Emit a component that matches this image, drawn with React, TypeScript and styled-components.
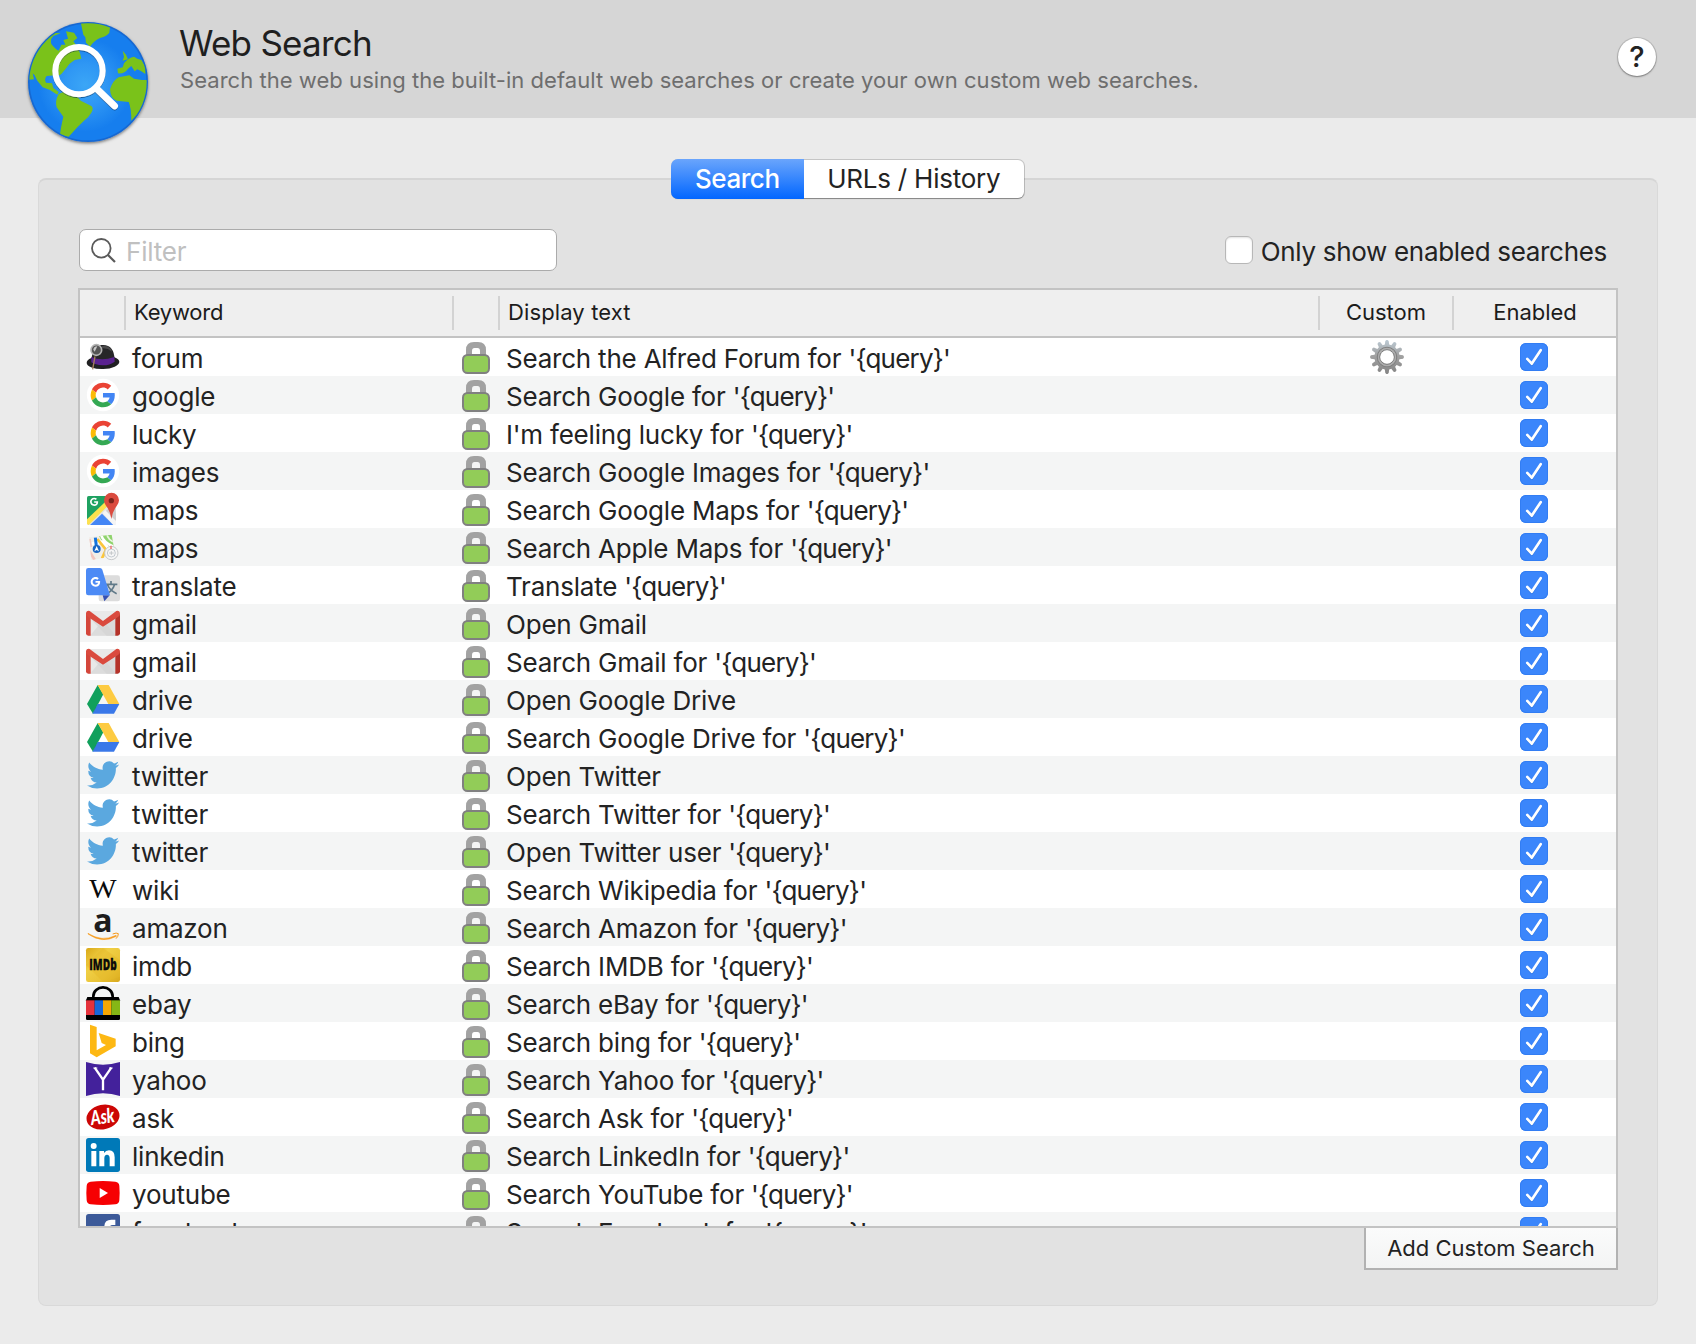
import React from "react";
import styled, { createGlobalStyle } from "styled-components";

const GlobalStyle = createGlobalStyle`
  * { box-sizing: border-box; }
  body { margin: 0; background: #ebebeb; }
`;

const Window = styled.div`
  width: 1696px;
  height: 1344px;
  overflow: hidden;
  background: #ebebeb;
  color: #232323;
  font-family: Inter, "Liberation Sans", sans-serif;
  display: flex;
  flex-direction: column;
`;

const Header = styled.header`
  height: 118px;
  flex: none;
  background: #d6d6d6;
  display: flex;
  align-items: flex-start;
  padding: 18px 40px 0 24px;
`;

const Titles = styled.div`
  flex: 1;
  padding: 4px 0 0 27px;
`;

const Title = styled.h1`
  margin: 0;
  font-size: 35px;
  line-height: 42px;
  font-weight: 400;
  letter-spacing: -0.75px;
  color: #1f1f1f;
`;

const Subtitle = styled.p`
  margin: 0;
  padding: 2px 0 0 1px;
  font-size: 22px;
  line-height: 28px;
  letter-spacing: 0.04px;
  color: #6e6e6e;
`;

const HelpButton = styled.button`
  margin-top: 20px;
  width: 38px;
  height: 38px;
  padding: 0;
  border: 0;
  border-radius: 50%;
  background: #fff;
  box-shadow: 0 0 0 1px rgba(0, 0, 0, 0.12), 0 1px 2px rgba(0, 0, 0, 0.35);
  font: 500 29px/38px Inter, sans-serif;
  color: #232323;
`;

const Body = styled.main`
  flex: 1;
  padding: 42px 38px 0;
  display: flex;
  flex-direction: column;
`;

const Tabs = styled.div`
  align-self: center;
  display: flex;
  height: 38px;
  width: 352px;
  margin: 0 0 -20px 0;
  z-index: 1;
  border-radius: 6px;
  background: #fff;
  box-shadow: 0 0 0 1px rgba(0, 0, 0, 0.16), 0 1px 1px rgba(0, 0, 0, 0.3);
`;

const Tab = styled.button<{ $active?: boolean }>`
  width: ${(p) => (p.$active ? "133px" : "221px")};
  height: ${(p) => (p.$active ? "40px" : "38px")};
  margin: ${(p) => (p.$active ? "-1px 0 -1px -1px" : "0")};
  border: 0;
  padding: 0;
  border-radius: ${(p) => (p.$active ? "7px 0 0 7px" : "0 6px 6px 0")};
  background: ${(p) => (p.$active ? "linear-gradient(#6aa5fc, #0166ff)" : "transparent")};
  color: ${(p) => (p.$active ? "#fff" : "#232323")};
  font: ${(p) => (p.$active ? 500 : 400)} 26px/36px Inter, sans-serif;
  letter-spacing: ${(p) => (p.$active ? "-0.45px" : "-0.23px")};
`;

const Panel = styled.section`
  height: 1128px;
  border: 1px solid #d9d9d9;
  border-top: 2px solid #d5d5d5;
  border-radius: 8px;
  background: #e2e2e2;
  padding: 49px 39px 0 39px;
  display: flex;
  flex-direction: column;
`;

const Toolbar = styled.div`
  height: 59px;
  flex: none;
  display: flex;
  justify-content: space-between;
  align-items: flex-start;
`;

const FilterField = styled.label`
  width: 478px;
  height: 42px;
  margin-left: 1px;
  border: 1px solid #ababab;
  border-radius: 7px;
  background: #fff;
  display: flex;
  align-items: center;
  padding-left: 11px;
`;

const FilterInput = styled.input`
  flex: 1;
  border: 0;
  outline: 0;
  padding: 3px 0 0;
  margin-left: 10px;
  background: transparent;
  font: 400 26px/36px Inter, sans-serif;
  letter-spacing: -0.2px;
  &::placeholder { color: #c0c0c0; opacity: 1; }
`;

const OnlyEnabled = styled.label`
  display: flex;
  align-items: center;
  gap: 8px;
  margin: 4px 11px 0 0;
  font-size: 26px;
  line-height: 38px;
  letter-spacing: -0.31px;
`;

const EmptyBox = styled.span`
  width: 28px;
  height: 28px;
  margin-top: -5px;
  border: 1px solid #b7b7b7;
  border-radius: 6px;
  background: #fff;
  box-shadow: inset 0 1px 2px rgba(0, 0, 0, 0.12);
`;

const Table = styled.div`
  width: 1540px;
  height: 940px;
  flex: none;
  border: 2px solid #c3c3c3;
  background: #fff;
  overflow: hidden;
`;

const columns = "46px 328px 46px 820px 134px 162px";

const HeadRow = styled.div`
  display: grid;
  grid-template-columns: ${columns};
  height: 48px;
  padding: 6px 0;
  border-bottom: 2px solid #c3c3c3;
  background: #efefef;
`;

const HeadCell = styled.div<{ $center?: boolean; $last?: boolean; $spacing?: number }>`
  border-right: ${(p) => (p.$last ? "0" : "2px solid #d3d3d3")};
  padding-left: ${(p) => (p.$center ? "0" : "8px")};
  text-align: ${(p) => (p.$center ? "center" : "left")};
  font-size: 22px;
  line-height: 33px;
  letter-spacing: ${(p) => p.$spacing ?? 0}px;
  color: #1c1c1c;
`;

const Row = styled.div`
  display: grid;
  grid-template-columns: ${columns};
  height: 38px;
  background: #fff;
  &:nth-child(odd) { background: #f4f5f5; }
`;

const IconCell = styled.div`
  padding: 2px 0 0 6px;
  height: 38px;
  svg { display: block; overflow: visible; }
`;

const LockCell = styled.div`
  padding: 4px 0 0 8px;
  svg { display: block; }
`;

const TextCell = styled.div`
  padding: 4px 0 0 6px;
  font-size: 26px;
  line-height: 34px;
  letter-spacing: -0.21px;
  white-space: nowrap;
`;

const Query = styled.span`
  letter-spacing: -0.78px;
`;

const GearCell = styled.div`
  display: flex;
  justify-content: center;
  padding-top: 2px;
`;

const CheckCell = styled.div`
  padding: 5px 0 0 66px;
`;

const CheckBox = styled.span`
  display: block;
  width: 28px;
  height: 28px;
  border-radius: 6px;
  background: #3b86fb;
  box-shadow: inset 0 0 0 1px #327df3;
  svg { display: block; }
`;

const AddButton = styled.button`
  align-self: flex-end;
  width: 254px;
  height: 42px;
  padding: 0;
  border: 2px solid #b2b2b2;
  border-top: 0;
  border-radius: 0;
  background: linear-gradient(#fbfbfb, #f3f4f4);
  color: #232323;
  font: 400 22px/38px Inter, sans-serif;
`;

const GlobeSlot = styled.div`
  width: 128px;
  height: 132px;
  flex: none;
  z-index: 1;
  svg { display: block; }
`;

const Globe = () => (
  <svg width="128" height="132" viewBox="72 54 384 396">
    <defs>
      <radialGradient id="sea" gradientUnits="userSpaceOnUse" cx="255" cy="255" r="140">
        <stop offset="0" stopColor="#3ba6f6" />
        <stop offset="0.45" stopColor="#2f97f4" />
        <stop offset="1" stopColor="#167eee" />
      </radialGradient>
      <clipPath id="disc"><circle cx="264" cy="246" r="176" /></clipPath>
      <filter id="soft" x="-10%" y="-10%" width="120%" height="125%">
        <feDropShadow dx="0" dy="4" stdDeviation="4" floodOpacity="0.5" />
      </filter>
      <filter id="lens" x="-10%" y="-10%" width="120%" height="125%">
        <feDropShadow dx="0" dy="3" stdDeviation="1.5" floodColor="#03264d" floodOpacity="0.55" />
      </filter>
    </defs>
    <circle cx="264" cy="246" r="180" fill="#1668d2" filter="url(#soft)" />
    <circle cx="264" cy="246" r="175" fill="url(#sea)" />
    <g clipPath="url(#disc)" fill="#7ac21a">
      <path d="M242 66 L332 66 L328 98 Q322 108 300 114 Q282 122 270 140 L258 128 L256 112 L250 104 Z" />
      <path d="M80 240 L84 150 L150 98 L182 100 L160 108 Q150 118 154 132 Q166 148 176 152 L184 134 L196 134 L190 120 L204 116 L198 94 L222 98 L232 114 L220 124 L232 140 L240 160 L244 176 L224 180 L208 192 L196 208 L184 222 Q176 230 166 226 L140 228 Q132 236 138 248 L156 250 L160 264 L176 276 L172 284 L150 270 L128 262 L112 242 L104 226 L98 220 L102 238 Z" />
      <path d="M176 282 Q200 270 222 278 L242 302 L274 318 Q282 324 274 338 Q266 352 252 362 L232 382 L206 410 L180 404 Q182 384 190 350 L170 322 Q164 304 176 282 Z" />
      <path d="M354 220 L352 206 L368 202 L372 190 Q386 172 402 170 L412 176 L424 180 L436 200 L436 222 L424 214 L412 208 L404 214 L394 198 L384 206 Q374 222 354 220 Z" />
      <path d="M368 152 L378 164 L384 178 L368 182 L372 170 Z" />
      <path d="M330 268 Q338 242 356 232 L388 226 L402 236 L426 240 L460 240 L450 300 L394 362 Q394 324 386 306 L350 302 Q332 296 330 268 Z" />
    </g>
    <g filter="url(#lens)" fill="none" stroke="#fff">
      <circle cx="237" cy="212" r="71" strokeWidth="18" />
      <path d="M288 264 L344 318" strokeWidth="20" strokeLinecap="round" />
    </g>
  </svg>
);

const SearchGlyph = () => (
  <svg width="25" height="25" viewBox="0 0 25 25" fill="none" stroke="#5a5a5a" strokeWidth="1.8">
    <circle cx="10.3" cy="10.3" r="9.3" />
    <path d="M17 17 L24 24" strokeWidth="2.2" />
  </svg>
);

const Lock = () => (
  <svg width="28" height="32" viewBox="0 0 28 32">
    <path d="M4 13 V8 Q4 0 12 0 H16 Q24 0 24 8 V13 Z M10 13 H18 V9 Q18 6 15.500 6 H12.500 Q10 6 10 9 Z" fill="#a2a2a2" fillRule="evenodd" />
    <rect x="1" y="13" width="26" height="18" rx="4.500" fill="#92cc58" stroke="#808080" strokeWidth="2" />
  </svg>
);

const Tick = () => (
  <svg width="28" height="28" viewBox="0 0 28 28" fill="none" strokeLinecap="round" strokeLinejoin="round">
    <path d="M7.200 16.700 L11.700 21.500 L20.700 8" stroke="#1b62c8" strokeOpacity="0.5" strokeWidth="2.600" />
    <path d="M7.200 15.900 L11.700 20.700 L20.700 7.200" stroke="#fff" strokeWidth="2.700" />
  </svg>
);

const gearPath =
  Array.from({ length: 12 }, (_, i) => {
    const at = (r: number, a: number) => {
      const t = ((i * 30 + a) * Math.PI) / 180;
      return `${(r * Math.sin(t)).toFixed(2)} ${(-r * Math.cos(t)).toFixed(2)}`;
    };
    return `${i ? "L" : "M"}${at(12.6, -10)} L${at(16.2, -6)} L${at(16.9, -2)} L${at(16.9, 2)} L${at(16.2, 6)} L${at(12.6, 10)}`;
  }).join(" ") + "Z";

const Gear = () => (
  <svg width="34" height="34" viewBox="-17 -17 34 34">
    <defs>
      <linearGradient id="steel" x1="0" y1="0" x2="0" y2="1">
        <stop offset="0" stopColor="#bccad4" />
        <stop offset="0.45" stopColor="#a2a2a2" />
        <stop offset="1" stopColor="#858585" />
      </linearGradient>
      <mask id="hub">
        <rect x="-17" y="-17" width="34" height="34" fill="#fff" />
        <circle r="6.800" fill="#000" />
      </mask>
    </defs>
    <g mask="url(#hub)">
      <path fill="url(#steel)" d={gearPath} />
      <circle r="9.700" fill="none" stroke="#808080" strokeWidth="1.200" />
      <circle r="8.300" fill="none" stroke="#adadad" strokeWidth="1.800" />
      <circle r="7.200" fill="none" stroke="#787878" strokeWidth="1" />
    </g>
  </svg>
);

const Icon = ({ box, children }: { box: string; children: React.ReactNode }) => (
  <svg width="34" height="34" viewBox={box}>{children}</svg>
);

const GoogleMark = () => (
  <>
    <path fill="#EA4335" d="M24 9.5c3.54 0 6.71 1.22 9.21 3.6l6.85-6.85C35.9 2.38 30.47 0 24 0 14.62 0 6.51 5.38 2.56 13.22l7.98 6.19C12.43 13.72 17.74 9.5 24 9.5z" />
    <path fill="#4285F4" d="M46.98 24.55c0-1.57-.15-3.09-.38-4.55H24v9.02h12.94c-.58 2.96-2.26 5.48-4.78 7.18l7.73 6c4.51-4.18 7.09-10.36 7.09-17.65z" />
    <path fill="#FBBC05" d="M10.53 28.59c-.48-1.45-.76-2.99-.76-4.59s.27-3.14.76-4.59l-7.98-6.19C.92 16.46 0 20.12 0 24c0 3.88.92 7.54 2.56 10.78l7.97-6.19z" />
    <path fill="#34A853" d="M24 48c6.48 0 11.93-2.13 15.89-5.81l-7.73-6c-2.15 1.45-4.92 2.3-8.16 2.3-6.26 0-11.57-4.22-13.47-9.91l-7.98 6.19C6.51 42.62 14.62 48 24 48z" />
  </>
);

const WhiteG = ({ x, y, size }: { x: number; y: number; size: number }) => (
  <g transform={`translate(${x} ${y}) scale(${size / 48})`} fill="#fff">
    <path d="M24 9.500c3.540 0 6.710 1.220 9.210 3.600l6.850-6.850C35.900 2.380 30.470 0 24 0 10.700 0 0 10.700 0 24s10.700 24 24 24c13.500 0 23-9.500 23-23.500 0-1.500-.1-3-.4-4.500H24v9.020h12.940c-1.500 6-6.500 9.500-12.940 9.500-8 0-14.200-6.500-14.200-14.500S16 9.500 24 9.500z" />
  </g>
);

const AlfredIcon = () => (
  <Icon box="48 15 102 102">
    <ellipse cx="99" cy="82" rx="49" ry="20" fill="#202022" transform="rotate(-2 99 82)" />
    <path d="M64 78 Q66 34 94 30 Q132 26 134 74 Q134 88 100 90 Q66 90 64 78Z" fill="#262628" />
    <path d="M64 66 Q94 80 133 66 L134 80 Q120 91 98 91 Q76 90 64 82Z" fill="#5a2290" />
    <path d="M96 34 Q120 30 126 50 Q112 38 96 40Z" fill="#4a4a4a" />
    <path d="M75 64 L68 103" stroke="#a77f5c" strokeWidth="4" />
    <circle cx="79" cy="45" r="16" fill="#555" stroke="#b4b4b4" strokeWidth="5" />
    <path d="M70 44 Q72 34 82 34 L74 50Z" fill="#c9c9c9" />
  </Icon>
);

const GoogleIcon = () => (
  <Icon box="48 129 102 102">
    <circle cx="99" cy="180" r="48.500" fill="#fff" />
    <g transform="translate(62 143) scale(1.54)"><GoogleMark /></g>
  </Icon>
);

const GoogleMapsIcon = () => (
  <Icon box="48 471 102 102">
    <defs><clipPath id="gm"><rect x="51" y="483" width="87" height="87" rx="5" /></clipPath></defs>
    <g clipPath="url(#gm)">
      <rect x="50" y="480" width="90" height="92" fill="#e4e4e4" />
      <path d="M50 480 H125 V498 L50 566Z" fill="#1fa261" />
      <path d="M48 556 L106 500 L116 510 L52 574Z" fill="#fde14f" />
      <path d="M56 574 L96 536 L134 574Z" fill="#4486f5" />
      <path d="M104 532 L134 502 L140 560Z" fill="#cfcfcf" />
      <path d="M98 534 L106 526 L142 562 V574 H134Z" fill="#f5f5f5" />
    </g>
    <WhiteG x={60} y={488} size={25} />
    <path d="M124 552 Q122 530 108 512 Q102 504 102 496 A22.500 22.500 0 0 1 147 496 Q147 504 140 513 Q127 530 124 552Z" fill="#db4b3f" />
    <circle cx="124" cy="497" r="8" fill="#7c241c" />
  </Icon>
);

const AppleMapsIcon = () => (
  <Icon box="48 15 102 102">
    <defs><clipPath id="am"><path d="M57 37 L125 29 L136 92 L64 106Z" /></clipPath></defs>
    <g clipPath="url(#am)">
      <rect x="50" y="20" width="95" height="95" fill="#f1eee8" />
      <path d="M86 30 L128 26 L136 72 L112 60 Q94 52 86 30Z" fill="#8fd36d" />
      <path d="M92 26 Q98 52 132 66" stroke="#fff" strokeWidth="8" fill="none" />
      <path d="M110 24 Q112 44 134 52" stroke="#e9f6df" strokeWidth="5" fill="none" />
      <path d="M56 58 L98 50 L118 74" stroke="#fff" strokeWidth="9" fill="none" />
      <path d="M82 42 L108 74 L96 100" stroke="#fbc63b" strokeWidth="8" fill="none" />
      <path d="M56 76 L74 104" stroke="#f3c5bd" strokeWidth="8" />
      <path d="M60 42 L64 66" stroke="#f0c9c5" strokeWidth="5" />
      <path d="M76 38 L80 72" stroke="#1673dc" strokeWidth="9" />
    </g>
    <circle cx="80" cy="72" r="12" fill="#1b66c4" />
    <path d="M80 63 L87 79 L80 75 L73 79Z" fill="#fff" />
    <circle cx="124" cy="84" r="20" fill="#f6f6f6" stroke="#c6c9cb" strokeWidth="3" />
    <circle cx="124" cy="84" r="12" fill="none" stroke="#a9b4bd" strokeWidth="2" />
    <path d="M117 84 H131 M124 78 V90" stroke="#b0b6ba" strokeWidth="2" />
    <path d="M123 62 V72" stroke="#e66" strokeWidth="4" />
  </Icon>
);

const TranslateIcon = () => (
  <Icon box="48 129 102 102">
    <rect x="86" y="151" width="64" height="78" rx="7" fill="#dcdcdc" />
    <path d="M98 211 H119 L103 229Z" fill="#3550b4" />
    <path d="M106 178 H142 M123 168 V178 M112 178 Q118 196 140 206 M134 178 Q128 198 108 208" fill="none" stroke="#607988" strokeWidth="5" />
    <path d="M55 129 H90 Q95 129 97 134 L120 211 H55 Q48 211 48 204 V136 Q48 129 55 129Z" fill="#4c8af5" />
    <WhiteG x={62} y={156} size={29} />
  </Icon>
);

const GmailIcon = () => (
  <Icon box="48 243 102 102">
    <rect x="52" y="258" width="94" height="74" rx="4" fill="#e9e9e9" />
    <path d="M60 332 L90 296 L99 303 L108 296 L138 332Z" fill="#dcdcdc" />
    <path d="M62 278 L99 308 L138 272 V332 H110 L70 290Z" fill="#d2d2d2" opacity="0.6" />
    <path d="M48 266 L62 274 V332 H55 Q48 332 48 325Z" fill="#d4463b" />
    <path d="M150 266 L136 274 V332 H143 Q150 332 150 325Z" fill="#b5332a" />
    <path d="M48 266 Q48 257 56 257 Q59 257 62 260 L99 288 L136 260 Q139 257 142 257 Q150 257 150 266 Q150 272 145 275 L99 305 L53 275 Q48 272 48 266Z" fill="#da4a3e" />
  </Icon>
);

const DriveIcon = () => (
  <Icon box="48 471 102 102">
    <path d="M83 480 L100 508 L69 566 L51 537Z" fill="#11a05c" />
    <path d="M83 480 H116 L148 537 H115Z" fill="#fdcb42" />
    <path d="M83 537 H148 L132 566 H67Z" fill="#3a78e9" />
    <path d="M83 537 L69 566 L76 549Z" fill="#0c8a4c" />
  </Icon>
);

const TwitterIcon = () => (
  <Icon box="48 129 102 102">
    <path transform="translate(51 129.500) scale(4.020 4.180)" fill="#5ba8df" d="M23.953 4.57a10 10 0 01-2.825.775 4.958 4.958 0 002.163-2.723c-.951.555-2.005.959-3.127 1.184a4.92 4.92 0 00-8.384 4.482C7.69 8.095 4.067 6.13 1.64 3.162a4.822 4.822 0 00-.666 2.475c0 1.71.87 3.213 2.188 4.096a4.904 4.904 0 01-2.228-.616v.06a4.923 4.923 0 003.946 4.827 4.996 4.996 0 01-2.212.085 4.936 4.936 0 004.604 3.417 9.867 9.867 0 01-6.102 2.105c-.39 0-.779-.023-1.17-.067a13.995 13.995 0 007.557 2.209c9.053 0 13.998-7.496 13.998-13.985 0-.21 0-.42-.015-.63A9.935 9.935 0 0024 4.59z" />
  </Icon>
);

const WikiIcon = () => (
  <Icon box="48 471 102 102">
    <text x="99" y="548" textAnchor="middle" textLength="82" lengthAdjust="spacingAndGlyphs" fontFamily="Liberation Serif, serif" fontSize="82" fill="#0a0a0a">W</text>
  </Icon>
);

const AmazonIcon = () => (
  <Icon box="48 15 102 102">
    <text x="99" y="81" textAnchor="middle" textLength="58" lengthAdjust="spacingAndGlyphs" fontFamily="Open Sans, sans-serif" fontWeight="700" fontSize="99" fill="#1c1c1c">a</text>
    <path d="M54 85 Q96 112 138 91 L140 94 Q96 117 54 87Z" fill="#f79b1c" stroke="#f79b1c" strokeWidth="1.500" />
    <path d="M128 87 Q140 82 145 86 Q145 95 138 101" fill="none" stroke="#f79b1c" strokeWidth="3" />
  </Icon>
);

const ImdbIcon = () => (
  <Icon box="48 129 102 102">
    <defs>
      <linearGradient id="gold" x1="0" y1="0" x2="1" y2="1">
        <stop offset="0" stopColor="#d9a817" />
        <stop offset="0.35" stopColor="#f0cf45" />
        <stop offset="0.7" stopColor="#e9c235" />
        <stop offset="1" stopColor="#d8a81c" />
      </linearGradient>
    </defs>
    <rect x="48" y="129" width="102" height="102" rx="7" fill="url(#gold)" />
    <path d="M99 129 L150 165 V215 L99 231 L48 180Z" fill="#e5b827" opacity="0.45" />
    <text x="99" y="196" textAnchor="middle" textLength="82" lengthAdjust="spacingAndGlyphs" fontFamily="Open Sans, sans-serif" fontWeight="800" fontSize="46" fill="#0b0b0b" stroke="#0b0b0b" strokeWidth="1">IMDb</text>
  </Icon>
);

const EbayIcon = () => (
  <Icon box="48 243 102 102">
    <path d="M70 280 V274 A29 27 0 0 1 128 274 V280" fill="none" stroke="#000" strokeWidth="8" />
    <path d="M52 276 H146 L150 286 V341 Q150 345 146 345 H52 Q48 345 48 341 V286Z" fill="#000" />
    <rect x="48" y="286" width="26" height="44" fill="#e5323c" />
    <rect x="74" y="286" width="25" height="44" fill="#1767d8" />
    <rect x="99" y="286" width="25" height="44" fill="#f5a704" />
    <rect x="124" y="286" width="26" height="44" fill="#85b716" />
  </Icon>
);

const BingIcon = () => (
  <Icon box="48 357 102 102">
    <path d="M60 359 L80 366 V436 L108 420 L95 414 L86 384 L137 401 V424 L80 457 L60 445Z" fill="#fdb813" />
  </Icon>
);

const YahooIcon = () => (
  <Icon box="48 471 102 102">
    <path d="M48 471 Q99 487 150 471 V573 Q99 557 48 573Z" fill="#43219b" />
    <path d="M74 488 L99 524 L124 488 M99 522 V556" fill="none" stroke="#fff" strokeWidth="7" />
    <path d="M70 489 H82 M117 489 H128" stroke="#fff" strokeWidth="3" />
  </Icon>
);

const AskIcon = () => (
  <Icon box="48 90 102 102">
    <ellipse cx="99" cy="141" rx="50" ry="37" fill="#cc0605" transform="rotate(-12 99 141)" />
    <text x="98" y="161" textAnchor="middle" textLength="72" lengthAdjust="spacingAndGlyphs" transform="rotate(-8 98 145)" fontFamily="Lato, sans-serif" fontStyle="italic" fontWeight="900" fontSize="60" fill="#fff">Ask</text>
  </Icon>
);

const LinkedInIcon = () => (
  <Icon box="48 204 102 102">
    <rect x="48" y="204" width="102" height="102" rx="8" fill="#0079b8" />
    <circle cx="71" cy="228" r="9" fill="#fff" />
    <path d="M64 243 H79 V289 H64Z M88 243 H102 V249 Q107 241 117 241 Q134 241 134 262 V289 H119 V265 Q119 254 111 254 Q103 254 103 265 V289 H88Z" fill="#fff" />
  </Icon>
);

const YouTubeIcon = () => (
  <Icon box="48 318 102 102">
    <path d="M62 335 Q99 331 136 335 Q147 336 148 347 Q150 369 148 391 Q147 402 136 403 Q99 407 62 403 Q51 402 50 391 Q48 369 50 347 Q51 336 62 335Z" fill="#f60002" />
    <path d="M89 354 L114 369 L89 384Z" fill="#fff" />
  </Icon>
);

const FacebookIcon = () => (
  <Icon box="48 432 102 102">
    <rect x="48" y="432" width="102" height="102" rx="8" fill="#3c5a99" />
    <path d="M103 534 V497 H90 V481 H103 V470 Q103 449 124 449 H136 V465 H128 Q119 465 119 473 V481 H135 L133 497 H119 V534Z" fill="#fff" />
  </Icon>
);

type Search = { icon: React.FC; keyword: string; text: string; query?: boolean; custom?: boolean };

const searches: Search[] = [
  { icon: AlfredIcon, keyword: "forum", text: "Search the Alfred Forum for", query: true, custom: true },
  { icon: GoogleIcon, keyword: "google", text: "Search Google for", query: true },
  { icon: GoogleIcon, keyword: "lucky", text: "I'm feeling lucky for", query: true },
  { icon: GoogleIcon, keyword: "images", text: "Search Google Images for", query: true },
  { icon: GoogleMapsIcon, keyword: "maps", text: "Search Google Maps for", query: true },
  { icon: AppleMapsIcon, keyword: "maps", text: "Search Apple Maps for", query: true },
  { icon: TranslateIcon, keyword: "translate", text: "Translate", query: true },
  { icon: GmailIcon, keyword: "gmail", text: "Open Gmail" },
  { icon: GmailIcon, keyword: "gmail", text: "Search Gmail for", query: true },
  { icon: DriveIcon, keyword: "drive", text: "Open Google Drive" },
  { icon: DriveIcon, keyword: "drive", text: "Search Google Drive for", query: true },
  { icon: TwitterIcon, keyword: "twitter", text: "Open Twitter" },
  { icon: TwitterIcon, keyword: "twitter", text: "Search Twitter for", query: true },
  { icon: TwitterIcon, keyword: "twitter", text: "Open Twitter user", query: true },
  { icon: WikiIcon, keyword: "wiki", text: "Search Wikipedia for", query: true },
  { icon: AmazonIcon, keyword: "amazon", text: "Search Amazon for", query: true },
  { icon: ImdbIcon, keyword: "imdb", text: "Search IMDB for", query: true },
  { icon: EbayIcon, keyword: "ebay", text: "Search eBay for", query: true },
  { icon: BingIcon, keyword: "bing", text: "Search bing for", query: true },
  { icon: YahooIcon, keyword: "yahoo", text: "Search Yahoo for", query: true },
  { icon: AskIcon, keyword: "ask", text: "Search Ask for", query: true },
  { icon: LinkedInIcon, keyword: "linkedin", text: "Search LinkedIn for", query: true },
  { icon: YouTubeIcon, keyword: "youtube", text: "Search YouTube for", query: true },
  { icon: FacebookIcon, keyword: "facebook", text: "Search Facebook for", query: true },
];

export default function App() {
  return (
    <Window>
      <GlobalStyle />
      <Header>
        <GlobeSlot><Globe /></GlobeSlot>
        <Titles>
          <Title>Web Search</Title>
          <Subtitle>Search the web using the built-in default web searches or create your own custom web searches.</Subtitle>
        </Titles>
        <HelpButton>?</HelpButton>
      </Header>
      <Body>
        <Tabs>
          <Tab $active>Search</Tab>
          <Tab>URLs / History</Tab>
        </Tabs>
        <Panel>
          <Toolbar>
            <FilterField>
              <SearchGlyph />
              <FilterInput placeholder="Filter" />
            </FilterField>
            <OnlyEnabled>
              <EmptyBox />
              Only show enabled searches
            </OnlyEnabled>
          </Toolbar>
          <Table>
            <HeadRow>
              <HeadCell />
              <HeadCell $spacing={-0.25}>Keyword</HeadCell>
              <HeadCell />
              <HeadCell $spacing={0.12}>Display text</HeadCell>
              <HeadCell $center>Custom</HeadCell>
              <HeadCell $center $last>Enabled</HeadCell>
            </HeadRow>
            {searches.map((s, i) => (
              <Row key={i}>
                <IconCell><s.icon /></IconCell>
                <TextCell>{s.keyword}</TextCell>
                <LockCell><Lock /></LockCell>
                <TextCell>
                  {s.text}
                  {s.query && <> <Query>{"'{query}'"}</Query></>}
                </TextCell>
                <GearCell>{s.custom && <Gear />}</GearCell>
                <CheckCell><CheckBox><Tick /></CheckBox></CheckCell>
              </Row>
            ))}
          </Table>
          <AddButton>Add Custom Search</AddButton>
        </Panel>
      </Body>
    </Window>
  );
}
